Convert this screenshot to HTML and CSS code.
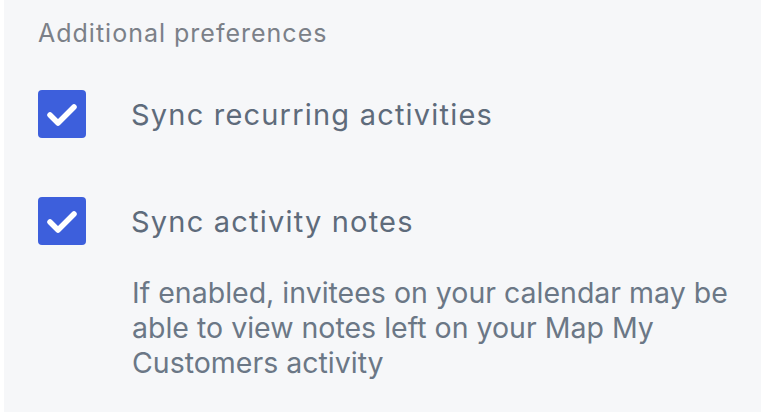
FILE: index.html
```html
<!DOCTYPE html>
<html lang="en">
<head>
    <meta charset="UTF-8">
    <meta name="viewport" content="width=device-width, initial-scale=1.0">
    <title>Additional preferences</title>
    <link rel="stylesheet" href="styles.css">
</head>
<body>
    <div class="panel">
        <h3 class="section-title">Additional preferences</h3>

        <div class="option">
            <span class="checkbox">
                <svg viewBox="0 0 48 48" width="48" height="48"><path d="M12 25 L20 33 L36 17" /></svg>
            </span>
            <span class="option-label">Sync recurring activities</span>
        </div>

        <div class="option second">
            <span class="checkbox">
                <svg viewBox="0 0 48 48" width="48" height="48"><path d="M12 25 L20 33 L36 17" /></svg>
            </span>
            <span class="option-label">Sync activity notes</span>
        </div>

        <div class="hint-clip">
            <p class="hint">If enabled, invitees on your calendar may be able to view notes left on your Map My Customers activity</p>
        </div>
    </div>
</body>
</html>
```

FILE: styles.css
```css
body {
    margin: 0;
    background: #ffffff;
    font-family: 'Inter', 'Noto Sans', sans-serif;
}
.panel {
    margin-left: 4px;
    width: 757px;
    height: 412px;
    box-sizing: border-box;
    padding: 15px 0 0 34px;
    background: #f6f7f9;
    overflow: hidden;
}
.section-title {
    margin: 0 0 39px 0;
    font-size: 25px;
    line-height: 36px;
    letter-spacing: 1px;
    font-weight: 400;
    color: #7b8088;
}
.option {
    display: flex;
    align-items: center;
    gap: 45px;
    height: 48px;
}
.option.second {
    margin-top: 59px;
}
.checkbox {
    width: 48px;
    height: 48px;
    border-radius: 4px;
    background: #3d5fdc;
    flex-shrink: 0;
}
.checkbox svg {
    display: block;
    fill: none;
    stroke: #ffffff;
    stroke-width: 5.5;
    stroke-linecap: round;
    stroke-linejoin: round;
}
.option-label {
    font-size: 29px;
    letter-spacing: 1.2px;
    color: #5e6b7b;
}
.hint-clip {
    margin: 30px 0 0 94px;
    width: 598px;
    overflow: hidden;
}
.hint {
    margin: 0;
    width: 630px;
    font-size: 28.5px;
    line-height: 35px;
    color: #6b7786;
}
```
